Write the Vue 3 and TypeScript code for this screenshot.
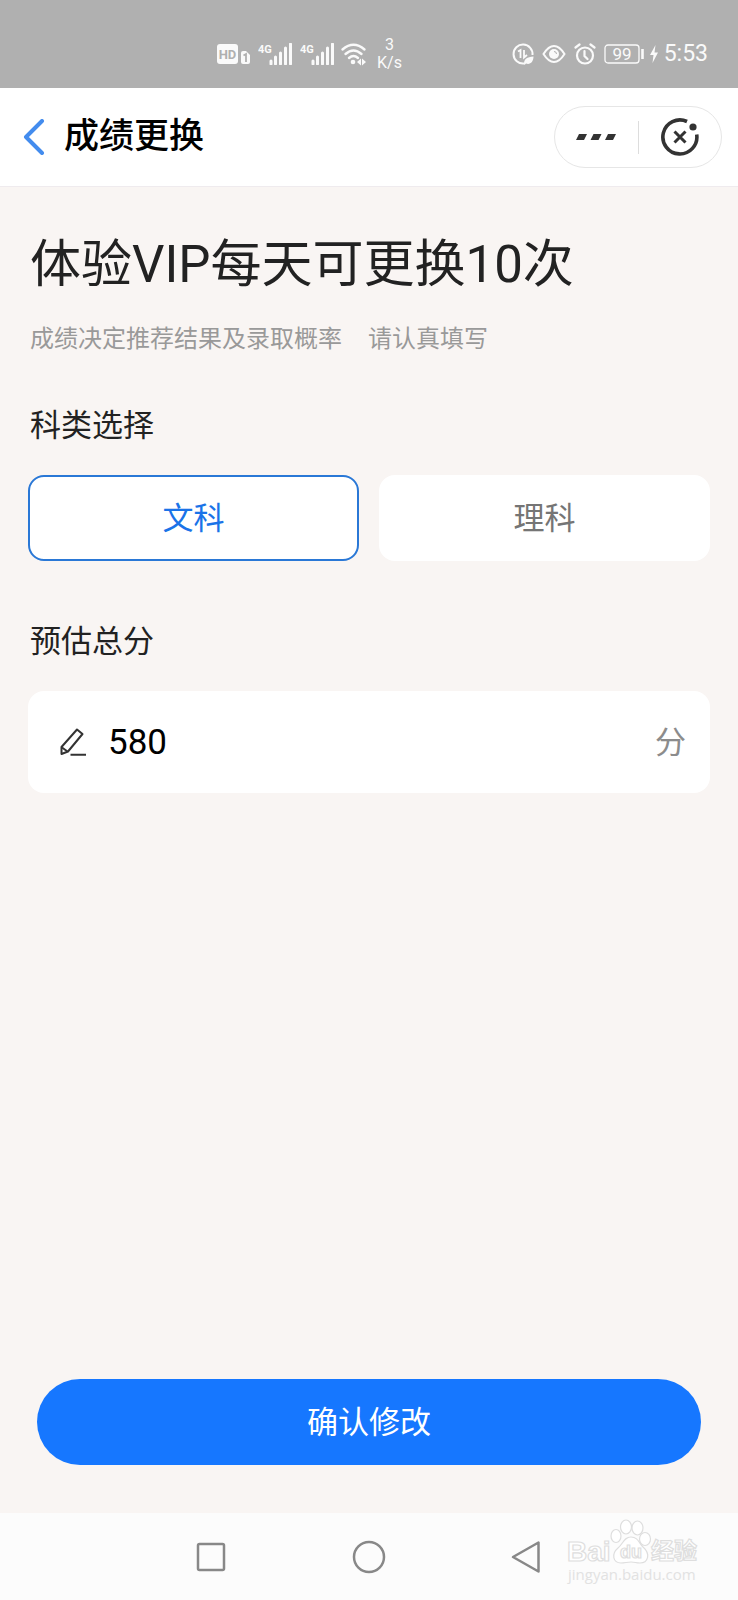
<script setup lang="ts">
import { ref } from 'vue'

const subjects: string[] = ['文科', '理科']
const subject = ref<string>('文科')
const score = ref<string>('580')
</script>

<template>
  <div class="screen">
    <div class="status">
      <div class="status-left">
        <svg width="34" height="22" viewBox="0 0 34 22">
          <rect x="0" y="1" width="21" height="20" rx="3" fill="#fafafa" />
          <text x="10.5" y="16" text-anchor="middle" class="hd">HD</text>
          <path d="M24 10a2 2 0 0 1 2-2h3l4 4v7a2 2 0 0 1-2 2h-5a2 2 0 0 1-2-2z" fill="#fafafa" />
          <path d="M26.500 12.500l2.500-1.500v8" fill="none" stroke="#b0b0b0" stroke-width="1.800" />
        </svg>
        <svg v-for="n in 2" :key="n" class="signal" width="35" height="22" viewBox="0 0 35 22">
          <text x="0" y="10" class="net">4G</text>
          <path d="M13 21v-3M17.500 21v-7M22.500 21v-11M27.500 21V5M32.500 21V1" stroke="#fafafa" stroke-width="3" stroke-linecap="round" />
        </svg>
        <svg class="wifi" width="26" height="22" viewBox="0 0 26 22">
          <g fill="none" stroke="#fafafa" stroke-width="2.400" stroke-linecap="round">
            <path d="M1.500 6.500Q12.500-3 23.500 6.500" />
            <path d="M4.500 11Q12.500 4 20.500 11" />
            <path d="M8 15Q12.500 11 17 15" />
          </g>
          <circle cx="12" cy="19" r="2.300" fill="#fafafa" />
          <path d="M20 15.500v7l-4-3.500zM21 15.500v7l4-3.500z" fill="#fafafa" />
        </svg>
        <div class="rate"><span>3</span><span>K/s</span></div>
      </div>
      <div class="status-right">
        <div class="indicators">
          <svg width="22" height="22" viewBox="0 0 22 22">
            <path d="M20.500 12A9.500 9.500 0 1 0 12 20.500" fill="none" stroke="#fafafa" stroke-width="2" />
            <path d="M6 8.500L8.500 7v8M12 7v7.500l3-2.500" fill="none" stroke="#fafafa" stroke-width="1.800" />
            <path d="M12 21c0-5 3-7 9.500-7.500C21.500 19 18 22 14 20.500l-1.500 1.500z" fill="#fafafa" />
          </svg>
          <svg width="24" height="22" viewBox="0 0 24 22">
            <path d="M1.500 11Q6.500 3 12 3t10.500 8Q17.500 19 12 19T1.500 11z" fill="none" stroke="#fafafa" stroke-width="2" />
            <circle cx="12" cy="11" r="5" fill="#fafafa" />
            <path d="M12 8.500a2.500 2.500 0 0 1 2.500 2.500" fill="none" stroke="#b0b0b0" />
          </svg>
          <svg width="22" height="22" viewBox="0 0 22 22">
            <g fill="none" stroke="#fafafa" stroke-width="2.200" stroke-linecap="round">
              <circle cx="11" cy="12.500" r="8" />
              <path d="M1.500 4.500l4-3M20.500 4.500l-4-3M10.500 8v5l3 3" />
            </g>
          </svg>
          <svg width="40" height="20" viewBox="0 0 40 20">
            <rect x="1" y="1" width="34" height="18" rx="3" fill="none" stroke="#fafafa" stroke-width="1.300" />
            <text x="18" y="16" text-anchor="middle" class="level">99</text>
            <path d="M38.500 5v10" stroke="#fafafa" stroke-width="2.600" />
          </svg>
        </div>
        <svg width="8" height="18" viewBox="0 0 8 18">
          <path d="M5.500 0L0 10h3.500L2.500 18 8 7.500H4.500z" fill="#fafafa" />
        </svg>
        <time class="clock">5:53</time>
      </div>
    </div>

    <header class="bar">
      <button class="back" type="button" aria-label="返回">
        <svg width="22" height="36" viewBox="0 0 22 36">
          <path d="M19 2L3 18l16 16" fill="none" stroke="#438cee" stroke-width="4" stroke-linecap="round" stroke-linejoin="round" />
        </svg>
      </button>
      <h1 class="bar-title">成绩更换</h1>
      <div class="capsule">
        <button type="button" aria-label="更多">
          <svg width="40" height="8" viewBox="0 0 40 8">
            <path d="M3 1h8L8 7H0zM17.500 1h8l-3 6h-8zM32 1h8l-3 6h-8z" fill="#333" />
          </svg>
        </button>
        <i class="divider"></i>
        <button type="button" aria-label="关闭">
          <svg width="38" height="38" viewBox="0 0 38 38">
            <g fill="none" stroke="#333">
              <path d="M26 3.500A17 17 0 1 0 35.700 16.500" stroke-width="3.600" />
              <path d="M13.500 13.500l11 11M24.500 13.500l-11 11" stroke-width="3" />
            </g>
            <circle cx="32" cy="9" r="3.600" fill="#333" />
          </svg>
        </button>
      </div>
    </header>

    <main class="content">
      <h2 class="headline">体验VIP每天可更换10次</h2>
      <p class="note"><span>成绩决定推荐结果及录取概率</span><span>请认真填写</span></p>

      <fieldset class="group">
        <legend class="label">科类选择</legend>
        <div class="options">
          <label v-for="item in subjects" :key="item" class="option" :class="{ active: subject === item }">
            <input v-model="subject" type="radio" name="subject" :value="item" />
            {{ item }}
          </label>
        </div>
      </fieldset>

      <label class="label total" for="score">预估总分</label>
      <div class="field">
        <svg width="26" height="28" viewBox="0 0 26 28">
          <g fill="none" stroke="#333" stroke-width="2" stroke-linejoin="round">
            <path d="M17 1.500l5.500 4.500L8 23.500l-6.500 2.500v-7z" />
            <path d="M2 19.500l5.500 4M10.500 26.800H26" />
          </g>
        </svg>
        <input id="score" v-model="score" type="text" inputmode="numeric" />
        <span class="unit">分</span>
      </div>

      <button class="confirm" type="button">确认修改</button>
    </main>

    <nav class="nav">
      <button type="button" aria-label="最近任务">
        <svg width="34" height="34" viewBox="0 0 34 34"><rect x="4" y="4" width="26" height="26" rx="1.500" /></svg>
      </button>
      <button type="button" aria-label="主屏幕">
        <svg width="34" height="34" viewBox="0 0 34 34"><circle cx="17" cy="17" r="15" /></svg>
      </button>
      <button type="button" aria-label="返回上一级">
        <svg width="34" height="34" viewBox="0 0 34 34"><path d="M28.500 2.500v29L3 17z" /></svg>
      </button>
      <svg class="mark" width="136" height="66" viewBox="0 0 136 66">
        <g fill="#fff" stroke="#dedede" stroke-width="1.200">
          <text x="1" y="41" class="brand">Bai</text>
          <ellipse cx="50" cy="16" rx="5" ry="6.500" />
          <ellipse cx="60" cy="7" rx="5.500" ry="7" />
          <ellipse cx="71.500" cy="8" rx="5.500" ry="7" />
          <ellipse cx="79" cy="19" rx="5.500" ry="6.500" />
          <path d="M65 17c7 0 8 6 12 10 8 7 5 16-3 16-4 0-5-1-9-1s-6 1-10 1c-8 0-10-9-3-15 5-4 6-11 13-11z" />
          <text x="54" y="38" class="paw">du</text>
          <text x="85" y="39" class="cjk">经验</text>
        </g>
        <text x="2" y="60" class="site">jingyan.baidu.com</text>
      </svg>
    </nav>
  </div>
</template>

<style>
body {
  margin: 0;
}
</style>

<style scoped>
.screen {
  display: flex;
  flex-direction: column;
  min-height: 100vh;
  background: #f9f5f3;
  color: #222;
  font-family: Roboto, "Noto Sans CJK SC", sans-serif;
}
button {
  display: flex;
  align-items: center;
  justify-content: center;
  margin: 0;
  padding: 0;
  border: 0;
  background: none;
  font: inherit;
  cursor: pointer;
}
svg {
  display: block;
  flex: none;
}

.status {
  display: flex;
  align-items: center;
  justify-content: space-between;
  box-sizing: border-box;
  height: 88px;
  padding: 20px 30px 0 217px;
  background: #b0b0b0;
  color: #fafafa;
}
.status-left,
.status-right,
.indicators {
  display: flex;
  align-items: center;
}
.status-right {
  gap: 6px;
}
.indicators {
  gap: 8px;
}
.hd {
  font: 700 13px Roboto, sans-serif;
  fill: #b0b0b0;
}
.signal {
  margin-left: 7px;
}
.net {
  font: 700 11px Roboto, sans-serif;
  fill: #fafafa;
}
.wifi {
  margin-left: 6px;
  overflow: visible;
}
.rate {
  display: flex;
  flex-direction: column;
  align-items: center;
  margin-left: 10px;
  font-size: 16px;
  line-height: 18px;
}
.level {
  font: 400 17px Roboto, sans-serif;
  fill: #fafafa;
}
.clock {
  font-size: 23px;
  line-height: 24px;
}

.bar {
  display: flex;
  align-items: center;
  box-sizing: border-box;
  height: 99px;
  padding: 0 16px 0 23px;
  border-bottom: 1px solid #efebee;
  background: #fff;
}
.bar-title {
  margin: 0 auto 0 19px;
  color: #000;
  font-size: 35px;
  font-weight: 500;
  line-height: 50px;
}
.capsule {
  display: flex;
  align-items: center;
  box-sizing: border-box;
  width: 168px;
  height: 62px;
  border: 1px solid #e6e6e6;
  border-radius: 31px;
}
.capsule button {
  flex: 1;
  height: 100%;
}
.divider {
  width: 1px;
  height: 33px;
  background: #ddd;
}

.content {
  display: flex;
  flex: 1;
  flex-direction: column;
  padding: 48px 28px;
}
.headline {
  margin: 0 0 0 2px;
  font-size: 51px;
  font-weight: 400;
  line-height: 60px;
}
.note {
  display: flex;
  gap: 26px;
  margin: 26px 0 0 2px;
  color: #999;
  font-size: 24px;
  line-height: 36px;
}
.group {
  min-width: 0;
  margin: 46px 0 0;
  padding: 0;
  border: 0;
}
.label {
  margin-left: 2px;
  padding: 0;
  font-size: 31px;
  line-height: 46px;
}
.options {
  display: flex;
  gap: 20px;
  margin-top: 26px;
}
.option {
  display: flex;
  flex: 1;
  align-items: center;
  justify-content: center;
  box-sizing: border-box;
  height: 86px;
  padding-bottom: 6px;
  border: 2px solid #fff;
  border-radius: 16px;
  background: #fff;
  color: #757575;
  font-size: 31px;
  cursor: pointer;
}
.option input {
  width: 0;
  height: 0;
  margin: 0;
  appearance: none;
}
.active {
  border-color: #2a78d6;
  color: #1a73e8;
}
.total {
  margin-top: 58px;
}
.field {
  display: flex;
  align-items: center;
  box-sizing: border-box;
  height: 102px;
  margin-top: 26px;
  padding: 0 24px 0 32px;
  border-radius: 16px;
  background: #fff;
}
.field input {
  flex: 1;
  min-width: 0;
  margin: 0 0 0 22px;
  padding: 0;
  border: 0;
  outline: 0;
  background: none;
  color: #000;
  font: 400 35px Roboto, sans-serif;
}
.unit {
  padding-bottom: 6px;
  color: #8c8c8c;
  font-size: 31px;
}
.confirm {
  height: 86px;
  margin: auto 9px 0;
  padding-bottom: 6px;
  border-radius: 43px;
  background: #1677ff;
  color: #fff;
  font-size: 31px;
}

.nav {
  position: relative;
  display: flex;
  justify-content: center;
  height: 87px;
  background: #fcfcfc;
}
.nav button {
  width: 158px;
}
.nav button svg {
  fill: none;
  stroke: #888;
  stroke-width: 2.500;
  stroke-linejoin: round;
}
.mark {
  position: absolute;
  right: 36px;
  bottom: 14px;
  overflow: visible;
  pointer-events: none;
}
.brand {
  font: 700 28px "Liberation Sans", sans-serif;
}
.paw {
  font: 700 18px "Liberation Sans", sans-serif;
}
.cjk {
  font: 700 23px "Noto Sans CJK SC", sans-serif;
}
.site {
  font: 400 15px "Open Sans", sans-serif;
  fill: #e2e2e2;
}
</style>
